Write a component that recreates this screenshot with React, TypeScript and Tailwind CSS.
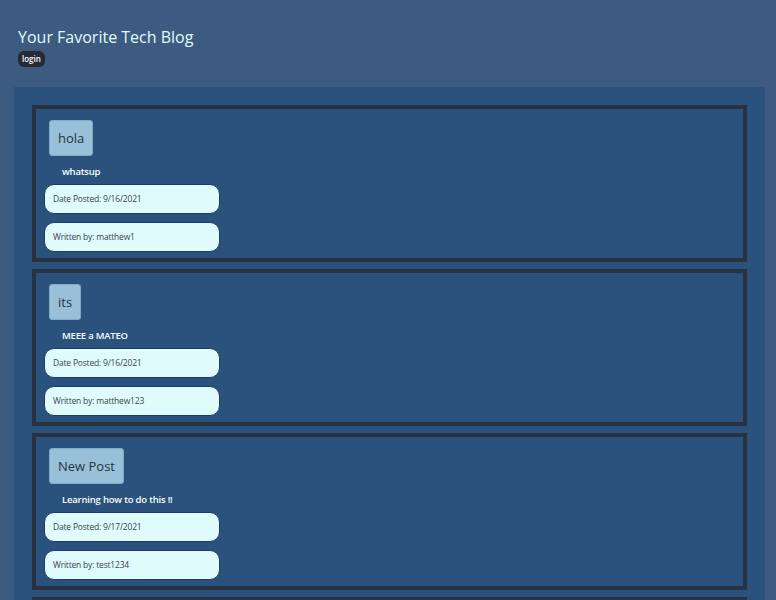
import React from "react";

type Post = {
  title: string;
  body: string;
  date: string;
  author: string;
};

const posts: Post[] = [
  { title: "hola", body: "whatsup", date: "9/16/2021", author: "matthew1" },
  { title: "its", body: "MEEE a MATEO", date: "9/16/2021", author: "matthew123" },
  { title: "New Post", body: "Learning how to do this !!", date: "9/17/2021", author: "test1234" },
  { title: "Another one", body: "testing again", date: "9/18/2021", author: "test1234" },
];

function PostCard({ post }: { post: Post }) {
  return (
    <div className="border-4 border-[#293241] bg-[#2a527c] px-2 pb-[6px]">
      {/* post title */}
      <div className="mt-[11px] ml-[5px] flex">
        <h2 className="bg-[#98c1d9] text-[#293241] text-[13px] leading-[18px] px-[8px] py-[8px] rounded-[3px] border border-[#7fa9c4]">
          {post.title}
        </h2>
      </div>

      {/* post body */}
      <p className="pl-[18px] pt-[3px] text-[9.5px] font-semibold tracking-[-0.2px] leading-[25px] text-[#f4ffff]">{post.body}</p>

      {/* meta pills */}
      <div className="flex flex-col gap-2">
        <div className="w-[176px] h-[30px] flex items-center px-2 rounded-[10px] border border-[#1b3b6f] bg-[#e0fbfc] text-[8.5px] tracking-[-0.2px] text-[#3a4450]">
          Date Posted: {post.date}
        </div>
        <div className="w-[176px] h-[30px] flex items-center px-2 rounded-[10px] border border-[#1b3b6f] bg-[#e0fbfc] text-[8.5px] tracking-[-0.2px] text-[#3a4450]">
          Written by: {post.author}
        </div>
      </div>
    </div>
  );
}

export default function App() {
  return (
    <div className="min-h-screen bg-[#3d5a80] pb-4" style={{ fontFamily: '"Open Sans", "Noto Sans", sans-serif' }}>
      {/* header */}
      <header className="pt-[26px] pl-[18px] h-[87px] flex flex-col items-start">
        <h1 className="text-[16px] leading-[22px] text-[#e0fbfc]">Your Favorite Tech Blog</h1>
        <button className="mt-[3px] h-4 px-[4px] rounded-[6px] bg-[#262b33] text-white text-[8px] font-semibold leading-4">
          login
        </button>
      </header>

      {/* posts */}
      <main className="ml-[14px] mr-[11px] bg-[#2a527c] p-[18px] flex flex-col gap-[7px]">
        {posts.map((post, i) => (
          <PostCard key={i} post={post} />
        ))}
      </main>
    </div>
  );
}
